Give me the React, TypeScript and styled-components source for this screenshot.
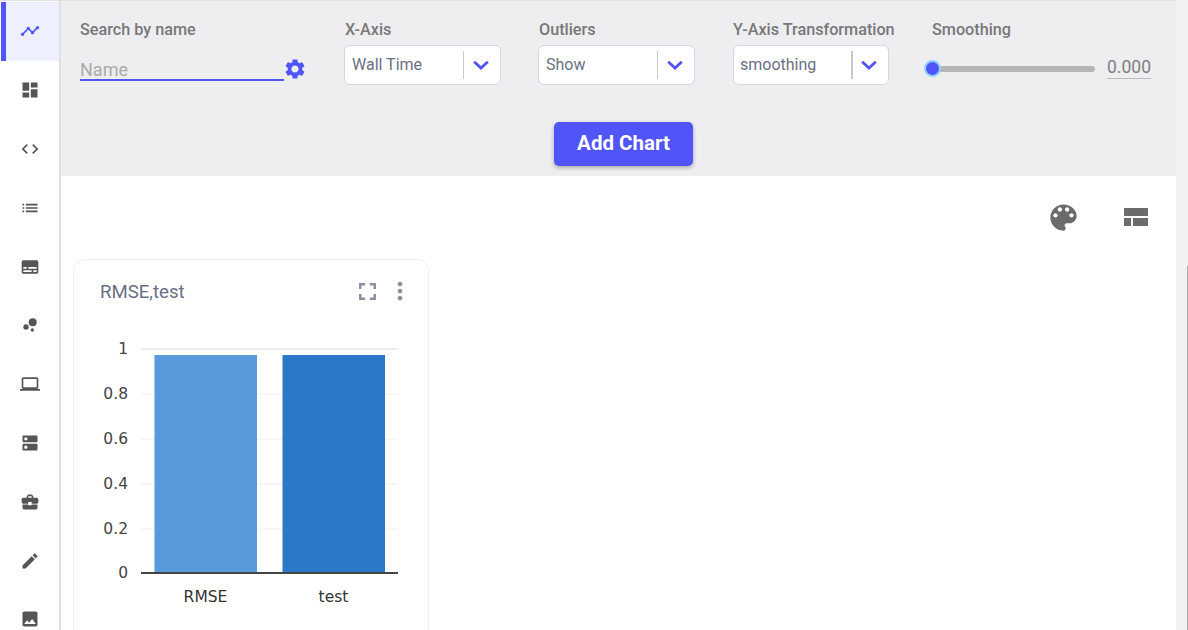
import React from 'react';
import styled, { createGlobalStyle } from 'styled-components';

const Global = createGlobalStyle`
  html, body { margin: 0; padding: 0; height: 630px; overflow: hidden; background: #fff; font-family: Roboto, "Liberation Sans", sans-serif; }
  #root { height: 630px; }
`;

const Page = styled.div`
  display: flex;
  width: 1188px;
  height: 630px;
  overflow: hidden;
`;
const Sidebar = styled.nav`
  flex: 0 0 61px;
  height: 630px;
  box-sizing: border-box;
  border-right: 2px solid #dfdfdf;
  border-top: 1px solid #e2e2e2;
  padding: 1px 0 0 1px;
  overflow: hidden;
`;
const NavItem = styled.div<{ $active?: boolean }>`
  height: 58.8px;
  display: flex;
  align-items: center;
  justify-content: center;
  box-sizing: border-box;
  background: ${p => (p.$active ? '#eef0ff' : '#fff')};
  border-left: 5px solid ${p => (p.$active ? '#5054f9' : '#fff')};
  color: ${p => (p.$active ? '#5054f9' : '#555')};
  svg { display: block; margin-left: -5px; }
`;
const Main = styled.main`
  flex: 0 0 1115px;
  display: flex;
  flex-direction: column;
  min-width: 0;
`;
const Filters = styled.section`
  height: 176px;
  box-sizing: border-box;
  background: #eeeef1;
  border-top: 1px solid #e2e2e2;
  display: flex;
  flex-direction: column;
`;
const FilterRow = styled.div`
  display: flex;
  padding: 20px 0 0 19px;
  height: 121px;
  box-sizing: border-box;
`;
const Field = styled.div<{ $w: number }>`
  flex: 0 0 ${p => p.$w}px;
`;
const Label = styled.div<{ $indent?: boolean }>`
  font-size: 16.2px;
  font-weight: 500;
  line-height: 17px;
  color: #787878;
  height: 17px;
  white-space: nowrap;
  padding-left: ${p => (p.$indent ? 1 : 0)}px;
`;
const SearchRow = styled.div`
  display: flex;
  margin-top: 19px;
  align-items: flex-start;
`;
const SearchInput = styled.div`
  width: 204px;
  height: 22px;
  box-sizing: content-box;
  border-bottom: 2px solid #5054f9;
  font-size: 18px;
  line-height: 26px;
  color: #ababab;
  font-weight: 400;
  white-space: nowrap;
`;
const Gear = styled.svg`
  display: block;
  margin: 0 0 0 -1px;
  color: #5054f9;
`;
const Select = styled.div<{ $w: number }>`
  margin-top: 7px;
  width: ${p => p.$w}px;
  height: 40px;
  box-sizing: border-box;
  border: 1px solid #d3d6e4;
  border-radius: 6px;
  background: #fff;
  display: flex;
  align-items: center;
  color: #6b6f85;
  font-size: 16px;
`;
const SelectValue = styled.span<{ $pad: number }>`
  flex: 1;
  padding: 0 0 2px ${p => p.$pad}px;
  white-space: nowrap;
`;
const Divider = styled.span<{ $thick?: boolean }>`
  flex: none;
  width: ${p => (p.$thick ? 2 : 1)}px;
  height: 28px;
  margin-right: ${p => (p.$thick ? -1 : 0)}px;
  background: #c8c8c8;
`;
const Chevron = styled.svg`
  flex: none;
  display: block;
  margin: 0 7px 0 5px;
  color: #5054f9;
`;
const SliderRow = styled.div`
  display: flex;
  align-items: flex-start;
`;
const SliderTrack = styled.div`
  position: relative;
  width: 163px;
  height: 6px;
  margin-top: 28px;
  background: #b5b5b5;
  border-radius: 3px;
`;
const SliderThumb = styled.div`
  position: absolute;
  left: -8px;
  top: -6px;
  width: 17px;
  height: 17px;
  box-sizing: border-box;
  background: #5054f9;
  border: 2px solid #8fd0fb;
  border-radius: 50%;
`;
const SliderValue = styled.div`
  margin: 16px 0 0 12px;
  width: 44px;
  height: 24px;
  border-bottom: 1px solid #bbb;
  font-size: 17.5px;
  line-height: 26px;
  color: #808080;
  text-align: center;
`;
const ButtonRow = styled.div`
  display: flex;
  justify-content: center;
  padding-left: 10px;
`;
const AddButton = styled.button`
  width: 139px;
  height: 44px;
  border: 0;
  border-radius: 5px;
  background: #5054f9;
  color: #fff;
  font: 700 20.5px/42px Roboto, sans-serif;
  padding: 0 0 2px;
  box-shadow: 0 2px 4px rgba(0, 0, 0, 0.28);
`;
const Content = styled.section`
  flex: 1;
  background: #fff;
  padding: 0 0 0 12px;
  min-height: 0;
  overflow: hidden;
`;
const Tools = styled.div`
  height: 83px;
  box-sizing: border-box;
  display: flex;
  justify-content: flex-end;
  align-items: center;
  padding: 0 28px 1px 0;
  gap: 43px;
  color: #6b6b6b;
  svg { display: block; }
`;
const Card = styled.article`
  width: 356px;
  height: 400px;
  box-sizing: border-box;
  border: 1px solid #f0f0f0;
  border-radius: 12px;
  background: #fff;
`;
const CardHead = styled.header`
  display: flex;
  align-items: center;
  height: 62px;
  padding: 0 14px 0 26px;
`;
const CardTitle = styled.h3`
  margin: 0;
  flex: 1;
  padding-top: 2px;
  font-size: 18.6px;
  font-weight: 400;
  color: #6b6f85;
`;
const CardActions = styled.div`
  display: flex;
  align-items: center;
  gap: 4px;
  color: #8b8fa5;
  svg { display: block; }
`;
const Chart = styled.svg`
  display: block;
  margin-top: 7px;
  font-family: "DejaVu Sans", Verdana, sans-serif;
`;
const Scrollbar = styled.div`
  flex: 0 0 12px;
  background: #f2f2f2;
  position: relative;
`;
const ScrollEdge = styled.div`
  position: absolute;
  right: 0;
  top: 266px;
  bottom: 0;
  width: 1px;
  background: #aaa;
`;

const P = {
  timeline: 'M23 8c0 1.1-.9 2-2 2-.18 0-.35-.02-.51-.07l-3.56 3.55c.05.16.07.34.07.52 0 1.1-.9 2-2 2s-2-.9-2-2c0-.18.02-.36.07-.52l-2.55-2.55c-.16.05-.34.07-.52.07s-.36-.02-.52-.07l-4.55 4.56c.05.16.07.33.07.51 0 1.1-.9 2-2 2s-2-.9-2-2 .9-2 2-2c.18 0 .35.02.51.07l4.56-4.55C8.02 9.36 8 9.18 8 9c0-1.1.9-2 2-2s2 .9 2 2c0 .18-.02.36-.07.52l2.55 2.55c.16-.05.34-.07.52-.07s.36.02.52.07l3.55-3.56C19.02 8.35 19 8.18 19 8c0-1.1.9-2 2-2s2 .9 2 2z',
  dashboard: 'M3 13h8V3H3v10zm0 8h8v-6H3v6zm10 0h8V11h-8v10zm0-18v6h8V3h-8z',
  code: 'M9.4 16.6L4.8 12l4.6-4.6L8 6l-6 6 6 6 1.4-1.4zm5.2 0l4.6-4.6-4.6-4.6L16 6l6 6-6 6-1.4-1.4z',
  list: 'M3 13h2v-2H3v2zm0 4h2v-2H3v2zm0-8h2V7H3v2zm4 4h14v-2H7v2zm0 4h14v-2H7v2zM7 7v2h14V7H7z',
  subtitles: 'M20 4H4c-1.1 0-2 .9-2 2v12c0 1.1.9 2 2 2h16c1.1 0 2-.9 2-2V6c0-1.1-.9-2-2-2zM4 12h4v2H4v-2zm10 6H4v-2h10v2zm6 0h-4v-2h4v2zm0-4H10v-2h10v2z',
  laptop: 'M20 18c1.1 0 1.99-.9 1.99-2L22 6c0-1.1-.9-2-2-2H4c-1.1 0-2 .9-2 2v10c0 1.1.9 2 2 2H0v2h24v-2h-4zM4 6h16v10H4V6z',
  dns: 'M20 13H4c-.55 0-1 .45-1 1v6c0 .55.45 1 1 1h16c.55 0 1-.45 1-1v-6c0-.55-.45-1-1-1zM7 19c-1.1 0-2-.9-2-2s.9-2 2-2 2 .9 2 2-.9 2-2 2zM20 3H4c-.55 0-1 .45-1 1v6c0 .55.45 1 1 1h16c.55 0 1-.45 1-1V4c0-.55-.45-1-1-1zM7 9c-1.1 0-2-.9-2-2s.9-2 2-2 2 .9 2 2-.9 2-2 2z',
  work: 'M10 16v-1H3.01L3 19c0 1.11.89 2 2 2h14c1.11 0 2-.89 2-2v-4h-7v1h-4zm10-9h-4.01V5l-2-2h-4l-2 2v2H4c-1.1 0-2 .9-2 2v3c0 1.11.89 2 2 2h6v-2h4v2h6c1.1 0 2-.9 2-2V9c0-1.1-.9-2-2-2zm-6 0h-4V5h4v2z',
  create: 'M3 17.25V21h3.75L17.81 9.94l-3.75-3.75L3 17.25zM20.71 7.04c.39-.39.39-1.02 0-1.41l-2.34-2.34c-.39-.39-1.02-.39-1.41 0l-1.83 1.83 3.75 3.75 1.83-1.83z',
  image: 'M21 19V5c0-1.1-.9-2-2-2H5c-1.1 0-2 .9-2 2v14c0 1.1.9 2 2 2h14c1.1 0 2-.9 2-2zM8.5 13.5l2.5 3.01L14.5 12l4.5 6H5l3.5-4.5z',
  settings: 'M19.14 12.94c.04-.3.06-.61.06-.94 0-.32-.02-.64-.07-.94l2.03-1.58c.18-.14.23-.41.12-.61l-1.92-3.32c-.12-.22-.37-.29-.59-.22l-2.39.96c-.5-.38-1.03-.7-1.62-.94l-.36-2.54c-.04-.24-.24-.41-.48-.41h-3.84c-.24 0-.43.17-.47.41l-.36 2.54c-.59.24-1.13.57-1.62.94l-2.39-.96c-.22-.08-.47 0-.59.22L2.74 8.87c-.12.21-.08.47.12.61l2.03 1.58c-.05.3-.09.63-.09.94s.02.64.07.94l-2.03 1.58c-.18.14-.23.41-.12.61l1.92 3.32c.12.22.37.29.59.22l2.39-.96c.5.38 1.03.7 1.62.94l.36 2.54c.05.24.24.41.48.41h3.84c.24 0 .44-.17.47-.41l.36-2.54c.59-.24 1.13-.56 1.62-.94l2.39.96c.22.08.47 0 .59-.22l1.92-3.32c.12-.22.07-.47-.12-.61l-2.01-1.58zM12 15.6c-1.98 0-3.6-1.62-3.6-3.6s1.62-3.6 3.6-3.6 3.6 1.62 3.6 3.6-1.62 3.6-3.6 3.6z',
  palette: 'M12 3a9 9 0 0 0 0 18c.83 0 1.5-.67 1.5-1.5 0-.39-.15-.74-.39-1.01-.23-.26-.38-.61-.38-.99 0-.83.67-1.5 1.5-1.5H16c2.76 0 5-2.24 5-5 0-4.42-4.03-8-9-8zm-5.5 9c-.83 0-1.5-.67-1.5-1.5S5.67 9 6.5 9 8 9.67 8 10.5 7.33 12 6.5 12zm3-4C8.67 8 8 7.33 8 6.5S8.67 5 9.5 5s1.5.67 1.5 1.5S10.33 8 9.5 8zm5 0c-.83 0-1.5-.67-1.5-1.5S13.67 5 14.5 5s1.5.67 1.5 1.5S15.33 8 14.5 8zm3 4c-.83 0-1.5-.67-1.5-1.5S16.67 9 17.5 9s1.5.67 1.5 1.5-.67 1.5-1.5 1.5z',
  fullscreen: 'M7 14H5v5h5v-2H7v-3zm-2-4h2V7h3V5H5v5zm12 7h-3v2h5v-5h-2v3zM14 5v2h3v3h2V5h-5z',
  more: 'M12 8c1.1 0 2-.9 2-2s-.9-2-2-2-2 .9-2 2 .9 2 2 2zm0 2c-1.1 0-2 .9-2 2s.9 2 2 2 2-.9 2-2-.9-2-2-2zm0 6c-1.1 0-2 .9-2 2s.9 2 2 2 2-.9 2-2-.9-2-2-2z',
};

const Icon = ({ d, size = 24 }: { d: string; size?: number }) => (
  <svg width={size} height={size} viewBox="0 0 24 24" fill="currentColor" aria-hidden="true">
    <path d={d} />
  </svg>
);

const Bubble = () => (
  <svg width={20} height={20} viewBox="0 0 24 24" fill="currentColor" aria-hidden="true">
    <circle cx="7.2" cy="14.4" r="3.2" />
    <circle cx="14.8" cy="18" r="2" />
    <circle cx="15.2" cy="8.8" r="4.8" />
  </svg>
);

const Caret = () => (
  <Chevron width={24} height={24} viewBox="0 0 24 24" fill="none" stroke="currentColor" strokeWidth={2.8} aria-hidden="true">
    <path d="M5.200 8.800l6.800 6.200 6.800-6.200" />
  </Chevron>
);

const navIcons = [
  P.timeline, P.dashboard, P.code, P.list, P.subtitles, 'bubble', P.laptop, P.dns, P.work, P.create, P.image,
];

const ticks = [
  { y: 349, label: '1' },
  { y: 394, label: '0.8' },
  { y: 439, label: '0.6' },
  { y: 484, label: '0.4' },
  { y: 529, label: '0.2' },
];

export default function App() {
  return (
    <Page>
      <Global />
      <Sidebar>
        {navIcons.map((d, i) => (
          <NavItem key={i} $active={i === 0}>
            {d === 'bubble' ? <Bubble /> : <Icon d={d} size={20} />}
          </NavItem>
        ))}
      </Sidebar>
      <Main>
        <Filters>
          <FilterRow>
            <Field $w={264}>
              <Label>Search by name</Label>
              <SearchRow>
                <SearchInput>Name</SearchInput>
                <Gear width={24} height={24} viewBox="0 0 24 24" fill="currentColor" aria-hidden="true">
                  <path d={P.settings} />
                </Gear>
              </SearchRow>
            </Field>
            <Field $w={194}>
              <Label $indent>X-Axis</Label>
              <Select $w={157}>
                <SelectValue $pad={7}>Wall Time</SelectValue>
                <Divider />
                <Caret />
              </Select>
            </Field>
            <Field $w={195}>
              <Label $indent>Outliers</Label>
              <Select $w={157}>
                <SelectValue $pad={7}>Show</SelectValue>
                <Divider />
                <Caret />
              </Select>
            </Field>
            <Field $w={199}>
              <Label>Y-Axis Transformation</Label>
              <Select $w={156}>
                <SelectValue $pad={6}>smoothing</SelectValue>
                <Divider $thick />
                <Caret />
              </Select>
            </Field>
            <Field $w={220}>
              <Label>Smoothing</Label>
              <SliderRow>
                <SliderTrack>
                  <SliderThumb />
                </SliderTrack>
                <SliderValue>0.000</SliderValue>
              </SliderRow>
            </Field>
          </FilterRow>
          <ButtonRow>
            <AddButton>Add Chart</AddButton>
          </ButtonRow>
        </Filters>
        <Content>
          <Tools>
            <Icon d={P.palette} size={35} />
            <svg width={24} height={18} viewBox="0 0 24 18" fill="currentColor" aria-hidden="true">
              <rect x="0" y="0" width="24" height="8" />
              <rect x="0" y="10" width="7" height="8" />
              <rect x="9" y="10" width="15" height="8" />
            </svg>
          </Tools>
          <Card>
            <CardHead>
              <CardTitle>RMSE,test</CardTitle>
              <CardActions>
                <Icon d={P.fullscreen} size={29} />
                <Icon d={P.more} size={28} />
              </CardActions>
            </CardHead>
            <Chart width={354} height={300} viewBox="74 329 354 300" role="img">
              {ticks.map(t => (
                <g key={t.label}>
                  <line x1="141" x2="398" y1={t.y} y2={t.y} stroke={t.label === '1' ? '#e8e8e8' : '#f0f0f0'} strokeWidth={t.label === '1' ? 1.5 : 1} />
                  <text x="128" y={t.y + 5} textAnchor="end" fontSize="15.500" fill="#444">{t.label}</text>
                </g>
              ))}
              <rect x="154.500" y="355" width="102.500" height="218" fill="#5899da" />
              <rect x="282.500" y="355" width="102.500" height="218" fill="#2c78c8" />
              <line x1="141" x2="398" y1="573" y2="573" stroke="#444" strokeWidth="2" />
              <text x="128" y="578" textAnchor="end" fontSize="15.500" fill="#444">0</text>
              <text x="205.500" y="602" textAnchor="middle" fontSize="15.500" fill="#333">RMSE</text>
              <text x="333.500" y="602" textAnchor="middle" fontSize="15.500" fill="#333">test</text>
            </Chart>
          </Card>
        </Content>
      </Main>
      <Scrollbar>
        <ScrollEdge />
      </Scrollbar>
    </Page>
  );
}
